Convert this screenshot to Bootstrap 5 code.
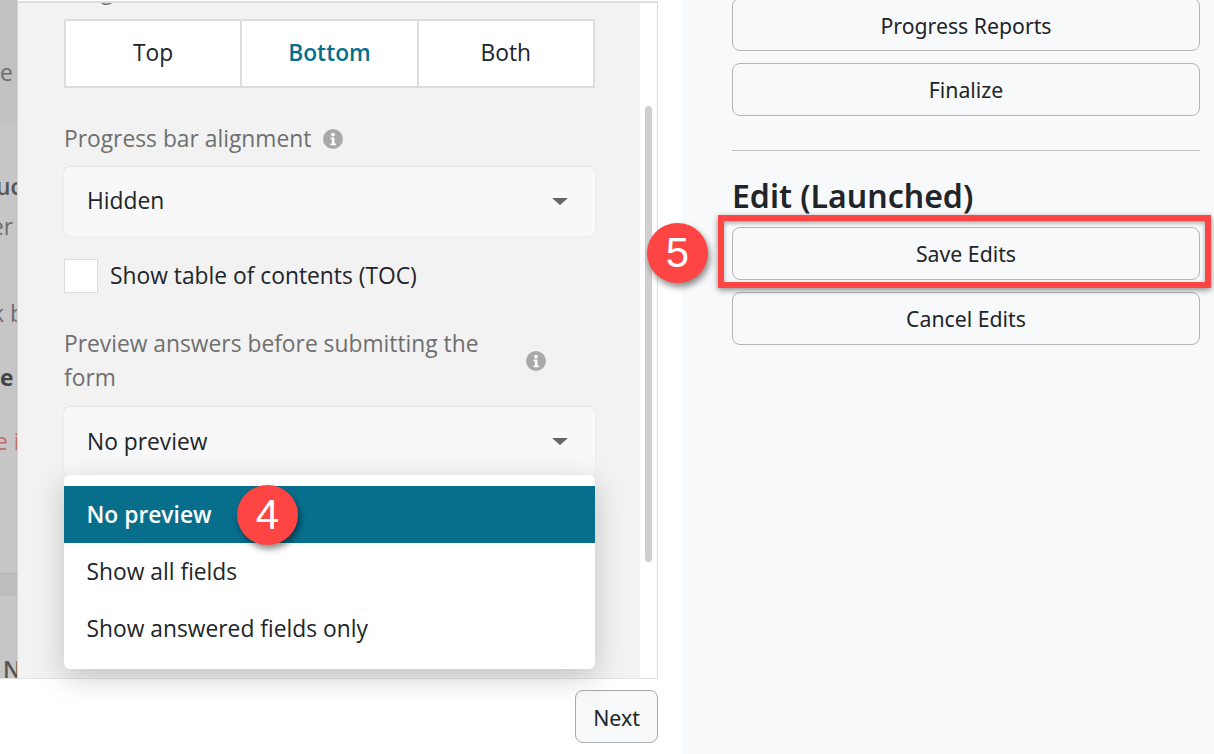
<!DOCTYPE html>
<html lang="en"><head><meta charset="utf-8"><title>Form settings</title>
<link href="https://cdn.jsdelivr.net/npm/bootstrap@5.3.0/dist/css/bootstrap.min.css" rel="stylesheet">
<style>
html,body{height:754px;overflow:hidden}
body{font-family:"Open Sans","Noto Sans",sans-serif;background:#fff;color:#212529;position:relative;font-size:22.8px}
.left-pane{width:682px;height:754px;flex:none}
.right-pane{background:#f8f9fa;padding:0 14px 0 50px;height:754px}
.panel-row{height:679px;width:658px;border-bottom:1px solid #e2e2e2}
.dim-strip{width:18px;flex:none;background:#c6c6c6;height:678px;overflow:hidden;color:#6d6d6d;position:relative;z-index:6;border-right:1px solid #d4d4d4}
.dim-band{height:123px;padding-top:58px;background:#c1c1c1}
.dim-mid{height:450px;display:flow-root}
.dim-sep{height:23px;background:#bdbdbd;border-top:1px solid #b3b3b3}
.dim-tail{padding-top:59px;color:#555;font-weight:600}
.dim-line{line-height:30px;white-space:nowrap;height:30px;overflow:hidden}
.dl-1{margin-top:49px;margin-left:-4px;font-weight:600;color:#555}
.dl-2{margin-top:10px;margin-left:-9px}
.dl-3{margin-top:57px;margin-left:-8px}
.dl-4{margin-top:34px;font-weight:700;color:#444}
.dl-5{margin-top:34px;margin-left:-5px;color:#c26a6a}
.dl-6{margin-left:3px}
.main-col{width:622px;background:#f2f2f2;padding:0 45px 0 46px;border-top:2px solid #ddd;margin-top:1px;height:677px;flex:none}
.gutter{width:18px;flex:none;border-top:2px solid #ddd;border-right:1px solid #ddd;margin-top:1px;height:677px;padding:103px 5px 0 5px}
.thumb{width:7px;height:456px;background:#cfcfcf;border-radius:4px}
.clip-label{height:16px;overflow:hidden}
.clip-label span{display:block;margin-top:-29px}
.field-label{color:#6f6f6f;line-height:34px}
.seg-group{height:69px;border:2px solid #ddd;background:#fff}
.seg-cell{flex:1 1 0;border-right:2px solid #ddd;line-height:63px;text-align:center}
.seg-cell:last-child{border-right:0}
.seg-on{color:#076f8c;font-weight:600}
.info-icon{width:20px;height:20px;flex:none;display:block}
.fake-select{height:69px;background:#f8f8f8;border-radius:6px;padding:0 27px 0 23px;box-shadow:0 -1px 2px rgba(0,0,0,.08),0 1px 1px rgba(0,0,0,.02)}
.caret-down{width:0;height:0;border-left:8px solid transparent;border-right:8px solid transparent;border-top:7px solid #666}
.check-box{width:34px;height:34px;background:#fff;border:1px solid #ddd;flex:none}
.opt-menu{position:absolute;left:0;right:0;top:68px;z-index:5;background:#fff;border-radius:6px;padding:11px 0 12px;box-shadow:0 8px 30px rgba(0,0,0,.2)}
.opt-item{height:57px;line-height:57px;padding-left:22.5px}
.opt-on{background:#076f8c;color:#fff;font-weight:600}
.foot-row{width:658px;padding-top:11px}
.next-btn{width:83px;height:53px;background:#f8f9fa;border:1px solid #aaa;border-radius:8px;font-family:"Noto Sans",sans-serif;font-size:21.25px;padding:2px 0 0;color:#212529}
.act-btn{height:53px;background:#f8f9fa;border:1px solid #b5b5b5;border-radius:8px;font-family:"Noto Sans",sans-serif;font-size:21.25px;padding:0;color:#212529;display:block;width:100%}
.act-gap{margin-top:12px}
.first-btn{margin-top:-2px;padding-top:2px}
.right-rule{margin:34px 0 0;border-color:#999;opacity:.6}
.edit-title{font-family:"Noto Sans",sans-serif;font-weight:600;font-size:32px;line-height:40px;margin:25px 0 11px}
.callout{position:absolute;z-index:10;width:61px;height:60px;border-radius:50%;background:#ff4444;color:#fff;font-family:"Liberation Sans",sans-serif;font-size:42px;line-height:60px;text-align:center;box-shadow:2px 4px 6px rgba(0,0,0,.45)}
.call-4{left:237px;top:485px}
.call-5{left:647px;top:223px}
.red-frame{position:absolute;z-index:9;left:718px;top:215px;width:493px;height:73px;border:6px solid #ff4444;box-shadow:0 2px 6px rgba(0,0,0,.45),inset 0 2px 4px rgba(0,0,0,.35)}
.label-gap{margin-top:34px}
.select-gap{margin-top:11px}
.check-row{margin-top:23px}
.preview-row{margin-top:34px}
.preview-text{width:445px}
.preview-icon{margin-left:17px}
.select-wrap{margin-top:12px}
</style></head>
<body>
<div class="d-flex">
  <div class="left-pane">
    <div class="panel-row d-flex">
      <div class="dim-strip">
        <div class="dim-band"><div class="dim-line">e</div></div>
        <div class="dim-mid">
          <div class="dim-line dl-1">uc</div>
          <div class="dim-line dl-2">er</div>
          <div class="dim-line dl-3">k b</div>
          <div class="dim-line dl-4">e</div>
          <div class="dim-line dl-5">e i</div>
        </div>
        <div class="dim-sep"></div>
        <div class="dim-tail"><div class="dim-line dl-6">N</div></div>
      </div>
      <div class="main-col">
        <div class="clip-label field-label"><span>Progress bar location</span></div>
        <div class="seg-group d-flex">
          <div class="seg-cell">Top</div>
          <div class="seg-cell seg-on">Bottom</div>
          <div class="seg-cell">Both</div>
        </div>
        <div class="field-label d-flex align-items-center gap-2 label-gap"><span>Progress bar alignment</span>
          <svg class="info-icon ms-1" viewBox="0 0 20 20"><circle cx="10" cy="10" r="10" fill="#a9a9a9"/><circle cx="10" cy="5.6" r="1.9" fill="#fff"/><path d="M7.6 8.4h3.9v6h1.4v1.8H7.4v-1.8h1.5v-4.2H7.6z" fill="#fff"/></svg>
        </div>
        <div class="fake-select d-flex align-items-center justify-content-between select-gap"><span>Hidden</span><span class="caret-down"></span></div>
        <div class="d-flex align-items-center gap-2 check-row"><span class="check-box"></span><span class="ms-1">Show table of contents (TOC)</span></div>
        <div class="d-flex align-items-center preview-row">
          <div class="field-label preview-text">Preview answers before submitting the form</div>
          <svg class="info-icon preview-icon" viewBox="0 0 20 20"><circle cx="10" cy="10" r="10" fill="#a9a9a9"/><circle cx="10" cy="5.6" r="1.9" fill="#fff"/><path d="M7.6 8.4h3.9v6h1.4v1.8H7.4v-1.8h1.5v-4.2H7.6z" fill="#fff"/></svg>
        </div>
        <div class="position-relative select-wrap">
          <div class="fake-select d-flex align-items-center justify-content-between"><span>No preview</span><span class="caret-down"></span></div>
          <div class="opt-menu">
            <div class="opt-item opt-on">No preview</div>
            <div class="opt-item">Show all fields</div>
            <div class="opt-item">Show answered fields only</div>
          </div>
        </div>
      </div>
      <div class="gutter"><div class="thumb"></div></div>
    </div>
    <div class="foot-row d-flex justify-content-end"><button type="button" class="btn next-btn">Next</button></div>
  </div>
  <div class="right-pane flex-grow-1">
    <button type="button" class="btn act-btn first-btn">Progress Reports</button>
    <button type="button" class="btn act-btn act-gap">Finalize</button>
    <hr class="right-rule">
    <h2 class="edit-title">Edit (Launched)</h2>
    <button type="button" class="btn act-btn">Save Edits</button>
    <button type="button" class="btn act-btn act-gap">Cancel Edits</button>
  </div>
</div>
<div class="red-frame"></div>
<div class="callout call-4">4</div>
<div class="callout call-5">5</div>
<script src="https://cdn.jsdelivr.net/npm/bootstrap@5.3.0/dist/js/bootstrap.bundle.min.js"></script>
</body></html>
